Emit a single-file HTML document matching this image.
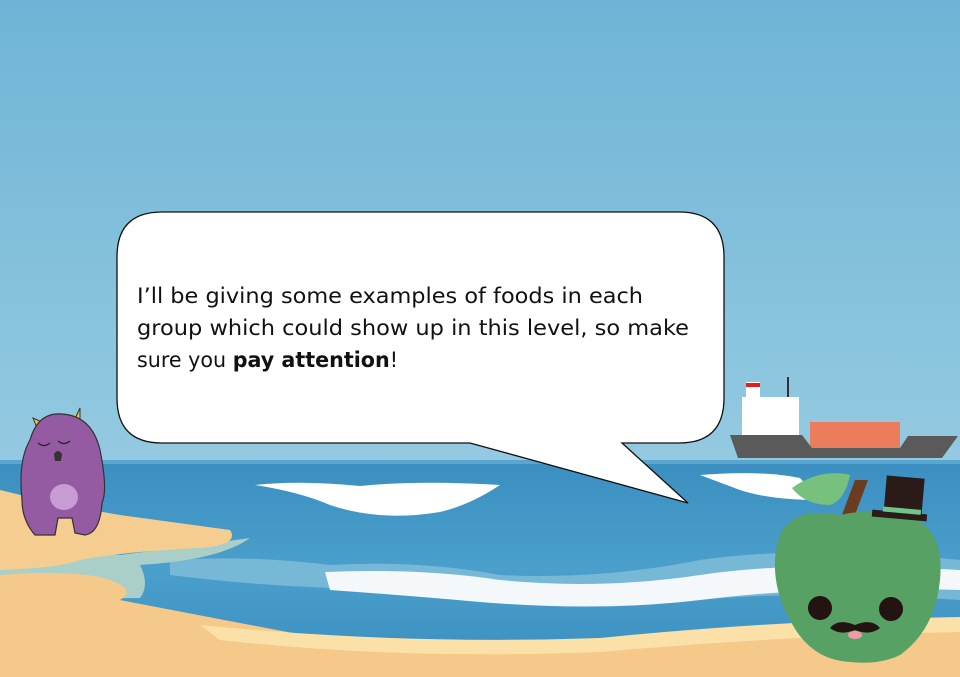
<!DOCTYPE html>
<html><head><meta charset="utf-8"><style>
html,body{margin:0;padding:0;width:960px;height:677px;overflow:hidden}
svg{display:block}
.t{font-family:"DejaVu Sans","Liberation Sans",sans-serif;font-size:21px;fill:#111}
</style></head><body>
<svg width="960" height="677" viewBox="0 0 960 677">
<defs>
<linearGradient id="sky" x1="0" y1="0" x2="0" y2="1">
<stop offset="0" stop-color="#6fb4d6"/><stop offset="1" stop-color="#a6d4e6"/></linearGradient>
<linearGradient id="sea" x1="0" y1="0" x2="0" y2="1">
<stop offset="0" stop-color="#3a8fc0"/><stop offset="0.5" stop-color="#4a9fcb"/><stop offset="1" stop-color="#3a8ec0"/></linearGradient>
</defs>
<rect width="960" height="677" fill="url(#sky)"/>
<rect y="460" width="960" height="217" fill="url(#sea)"/>
<rect y="460" width="960" height="4" fill="#5aa6cf"/>
<!-- ship -->
<g>
<rect x="742" y="397" width="24" height="40" fill="#fff"/>
<rect x="746" y="382" width="14" height="15" fill="#fff"/>
<rect x="746" y="383" width="14" height="4" fill="#e02020"/>
<rect x="763" y="397" width="36" height="40" fill="#fff"/>
<rect x="787" y="377" width="2" height="20" fill="#333"/>
<rect x="810" y="422" width="90" height="26" fill="#ec7d5c"/>
<path d="M730 435 H802 L812 448 H900 L908 436 H958 L942 458 H738 Z" fill="#5a5a5a"/>
</g>
<!-- waves -->
<path d="M255 485 Q300 480 360 486 Q420 480 500 485 Q470 505 440 512 Q380 522 330 505 Q300 492 255 485Z" fill="#fff"/>
<path d="M700 475 Q760 470 800 478 L820 500 Q770 500 740 490Z" fill="#fff"/>
<path d="M170 560 Q250 555 330 565 Q420 560 500 575 Q600 580 700 560 Q800 545 960 560 L960 600 Q800 590 700 600 Q600 610 480 600 Q400 592 330 588 Q250 585 170 575Z" fill="#8cc3dc" opacity="0.7"/>
<path d="M325 572 Q420 568 500 580 Q600 590 700 575 Q800 560 960 570 L960 590 Q820 585 700 600 Q600 612 480 602 Q400 595 330 590Z" fill="#f4f8fb"/>
<!-- sand -->
<path d="M0 560 Q60 550 120 555 Q200 545 250 538 Q220 560 140 565 Q150 585 140 598 L0 600Z" fill="#a9cfc8"/>
<path d="M0 490 Q60 505 120 515 L230 530 Q240 545 200 548 Q120 552 80 560 Q60 568 0 570Z" fill="#f6cd90"/>
<path d="M0 575 Q60 570 100 577 Q140 588 120 600 Q250 625 330 640 Q480 655 600 645 Q750 628 960 625 L960 677 L0 677Z" fill="#f4c98a"/>
<path d="M200 625 Q400 645 600 638 Q780 620 960 617 L960 632 Q780 636 600 652 Q400 660 220 640Z" fill="#fbe1a8"/>
<!-- monster -->
<g>
<path d="M33 418 L37 428 L44 423Z M80 408 L74 421 L80 423Z" fill="#e2c34e" stroke="#333" stroke-width="1"/>
<path d="M30 440 Q38 412 62 414 Q92 416 100 450 Q108 490 102 503 Q100 533 85 535 L75 533 L72 518 L58 518 L55 535 L35 535 Q22 520 22 500 Q18 460 30 440Z" fill="#945ba3" stroke="#333" stroke-width="1.2"/>
<ellipse cx="64" cy="497" rx="14" ry="13" fill="#c79bd3"/>
<path d="M38 443 Q44 448 50 443 M58 441 Q64 446 70 441" stroke="#222" fill="none" stroke-width="1.2"/>
<path d="M54 454 Q58 448 62 454 L61 461 L55 461Z" fill="#333"/>
</g>
<!-- apple -->
<g>
<path d="M792 488 Q820 468 850 475 Q845 500 830 505 Q805 505 792 488Z" fill="#77c07d"/>
<path d="M840 520 L855 480 L868 480 L853 520Z" fill="#6b3c1e"/>
<path d="M840 515 Q790 505 778 540 Q768 580 790 620 Q810 660 850 662 Q880 665 900 655 Q935 630 940 580 Q945 525 905 515 Q870 508 840 515Z" fill="#58a165"/>
<rect x="885" y="477" width="38" height="40" fill="#2a1a18" transform="rotate(5 904 497)"/>
<rect x="872" y="512" width="55" height="7" fill="#2a1a18" transform="rotate(5 900 515)"/>
<rect x="883" y="508" width="38" height="5" fill="#6fc48a" transform="rotate(5 900 510)"/>
<circle cx="820" cy="608" r="12" fill="#231412"/>
<circle cx="891" cy="609" r="12" fill="#231412"/>
<path d="M830 628 Q838 618 855 625 Q872 618 880 628 Q870 636 855 630 Q840 636 830 628Z" fill="#231412"/>
<ellipse cx="855" cy="635" rx="7" ry="4" fill="#f29aa5"/>
</g>
<!-- bubble -->
<path d="M162 212 H679 Q724 212 724 257 V398 Q724 443 679 443 H622 L688 503 L470 443 H162 Q117 443 117 398 V257 Q117 212 162 212Z" fill="#fff" stroke="#111" stroke-width="1.3"/>
<text class="t" x="137" y="303" textLength="506" lengthAdjust="spacingAndGlyphs">I’ll be giving some examples of foods in each</text>
<text class="t" x="137" y="335" textLength="552" lengthAdjust="spacingAndGlyphs">group which could show up in this level, so make</text>
<text class="t" x="137" y="367" textLength="261" lengthAdjust="spacingAndGlyphs">sure you <tspan font-weight="bold">pay attention</tspan>!</text>
</svg>
</body></html>
